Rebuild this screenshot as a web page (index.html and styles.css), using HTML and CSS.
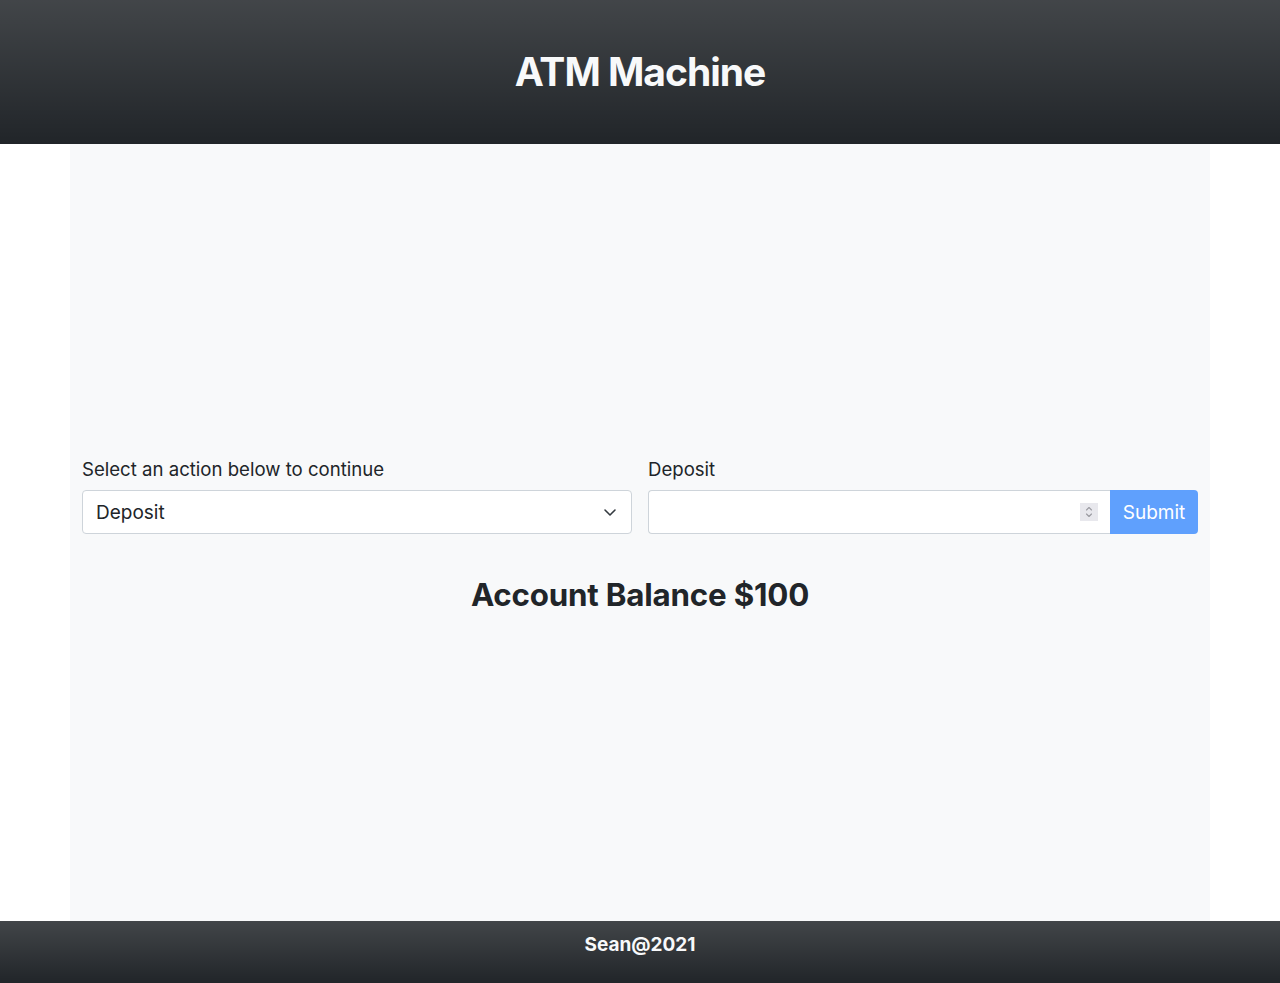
FILE: index.html
```html
<!DOCTYPE html>
<html lang="en">
<head>
<meta charset="utf-8">
<title>ATM Machine</title>
<link rel="stylesheet" href="styles.css">
</head>
<body>
<header class="site-header">
  <h1 class="site-title">ATM Machine</h1>
</header>
<main class="atm">
  <div class="atm-form">
    <div class="field">
      <label class="field-label" for="action">Select an action below to continue</label>
      <div class="select-wrap">
        <select id="action" class="select">
          <option>Deposit</option>
          <option>Cash Back</option>
        </select>
        <svg class="select-caret" width="14" height="10" viewBox="0 0 14 10" aria-hidden="true"><path d="M2 3 L7 8 L12 3" fill="none" stroke="#343a40" stroke-width="1.6" stroke-linecap="round" stroke-linejoin="round"/></svg>
      </div>
    </div>
    <div class="field">
      <label class="field-label" for="amount">Deposit</label>
      <div class="input-group">
        <div class="input-wrap">
          <input id="amount" class="input" type="number">
          <span class="spinner" aria-hidden="true">
            <svg width="18" height="18" viewBox="0 0 18 18"><path d="M6.5 7 L9 4.5 L11.5 7" fill="none" stroke="#9a9aa0" stroke-width="1.1" stroke-linecap="round" stroke-linejoin="round"/><path d="M6.5 11 L9 13.5 L11.5 11" fill="none" stroke="#9a9aa0" stroke-width="1.1" stroke-linecap="round" stroke-linejoin="round"/></svg>
          </span>
        </div>
        <button class="btn-submit" type="button" disabled>Submit</button>
      </div>
    </div>
  </div>
  <h2 class="balance">Account Balance $100</h2>
</main>
<footer class="site-footer">
  <h5 class="footer-text">Sean@2021</h5>
</footer>
</body>
</html>
```
FILE: styles.css
```css
* { box-sizing: border-box; }
html, body { margin: 0; padding: 0; }
body {
  font-family: Inter, "Noto Sans", "Liberation Sans", sans-serif;
  color: #212529;
  background: #fff;
  width: 1280px;
}
.site-header {
  height: 144px;
  display: flex;
  align-items: center;
  justify-content: center;
  background: #212529 linear-gradient(180deg, rgba(255,255,255,.15), rgba(255,255,255,0));
}
.site-title {
  margin: 0;
  font-size: 39px;
  font-weight: 700;
  letter-spacing: -1px;
  color: #f8f9fa;
  line-height: 48px;
}
.atm {
  width: 1140px;
  margin: 0 auto;
  height: 777px;
  background: #f8f9fa;
  padding: 3px 12px 0;
  display: flex;
  flex-direction: column;
  justify-content: center;
}
.atm-form {
  display: grid;
  grid-template-columns: 1fr 1fr;
  gap: 16px;
}
.field-label {
  display: block;
  font-size: 18.6px;
  line-height: 30px;
  margin-bottom: 6px;
  color: #212529;
}
.select-wrap { position: relative; }
.select {
  width: 100%;
  height: 44px;
  appearance: none;
  -webkit-appearance: none;
  border: 1px solid #ced4da;
  border-radius: 4px;
  background: #fff;
  font-family: inherit;
  font-size: 19px;
  color: #212529;
  padding: 0 40px 0 13px;
}
.select-caret {
  position: absolute;
  right: 15px;
  top: 17px;
  pointer-events: none;
}
.input-group { display: flex; }
.input-wrap { position: relative; flex: 1; }
.input {
  width: 100%;
  height: 44px;
  border: 1px solid #ced4da;
  border-right: none;
  border-radius: 4px 0 0 4px;
  background: #fff;
  font-family: inherit;
  font-size: 19px;
  padding: 0 16px;
  -moz-appearance: textfield;
}
.input::-webkit-inner-spin-button,
.input::-webkit-outer-spin-button { -webkit-appearance: none; margin: 0; }
.spinner {
  position: absolute;
  right: 12px;
  top: 13px;
  width: 18px;
  height: 18px;
  background: #e8e8ed;
  display: block;
}
.spinner svg { display: block; }
.btn-submit {
  width: 88px;
  height: 44px;
  border: none;
  border-radius: 0 4px 4px 0;
  background: #5fa0fd;
  color: #fff;
  font-family: inherit;
  font-size: 19px;
  padding: 0;
}
.balance {
  margin: 42px 0 0;
  text-align: center;
  font-size: 31.3px;
  font-weight: 700;
  line-height: 38px;
  letter-spacing: -0.2px;
  color: #212529;
}
.site-footer {
  height: 62px;
  padding-top: 12px;
  background: #212529 linear-gradient(180deg, rgba(255,255,255,.15), rgba(255,255,255,0));
  text-align: center;
}
.footer-text {
  margin: 0;
  font-size: 19px;
  font-weight: 700;
  line-height: 24px;
  color: #f8f9fa;
}
```
